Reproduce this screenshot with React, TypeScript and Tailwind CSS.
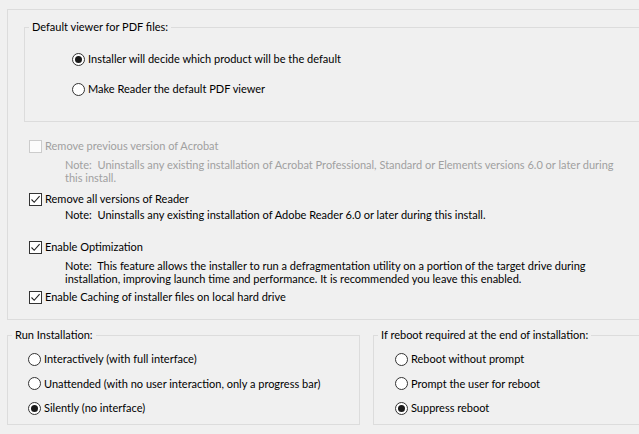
import React from "react";

const font = "font-['Lato',sans-serif] text-[11px] leading-[16px] text-black whitespace-nowrap";

function Radio({ checked }: { checked?: boolean }) {
  return (
    <span className="w-[13px] h-[13px] rounded-full border border-[#333333] bg-white flex items-center justify-center shrink-0">
      {checked && <span className="w-[7px] h-[7px] rounded-full bg-[#1a1a1a]" />}
    </span>
  );
}

function Check({ checked, disabled }: { checked?: boolean; disabled?: boolean }) {
  return (
    <span
      className={
        "w-[13px] h-[13px] border flex items-center justify-center shrink-0 " +
        (disabled ? "border-[#cccccc] bg-[#fcfcfc]" : "border-[#333333] bg-white")
      }
    >
      {checked && (
        <svg width="11" height="11" viewBox="0 0 11 11">
          <path d="M1.5 5.5 L4.2 8.3 L9.6 2.2" fill="none" stroke="#222" strokeWidth="1.1" />
        </svg>
      )}
    </span>
  );
}

function RadioRow({ label, checked }: { label: string; checked?: boolean }) {
  return (
    <div className="flex items-center gap-[3px] h-[16px]">
      <Radio checked={checked} />
      <span>{label}</span>
    </div>
  );
}

function CheckRow({ label, checked, disabled }: { label: string; checked?: boolean; disabled?: boolean }) {
  return (
    <div className={"flex items-center gap-[3px] h-[16px] " + (disabled ? "text-[#a0a0a0]" : "")}>
      <Check checked={checked} disabled={disabled} />
      <span>{label}</span>
    </div>
  );
}

export default function App() {
  return (
    <div className={"w-[639px] h-[434px] bg-[#f0f0f0] overflow-hidden pt-[9px] pl-[7px] " + font}>
      <div className="w-[660px] h-[311px] border-l border-t border-b border-[#dcdcdc] flex flex-col">
        <fieldset className="ml-[16px] mt-[9px] w-[640px] h-[103px] border border-[#dcdcdc] pt-0">
          <legend className="ml-[4px] px-[3px] leading-[16px]">Default viewer for PDF files:</legend>
          <div className="pl-[47px] pt-[16px] flex flex-col gap-[14px]">
            <RadioRow label="Installer will decide which product will be the default" checked />
            <RadioRow label="Make Reader the default PDF viewer" />
          </div>
        </fieldset>
        <div className="pl-[21px] mt-[16px] flex flex-col">
          <CheckRow label="Remove previous version of Acrobat" disabled />
          <div className="pl-[36px] mt-[4px] leading-[13px] text-[#a0a0a0]">
            Note:&nbsp; Uninstalls any existing installation of Acrobat Professional, Standard or Elements versions 6.0 or later during
            <br />
            this install.
          </div>
          <div className="mt-[7px]">
            <CheckRow label="Remove all versions of Reader" checked />
          </div>
          <div className="pl-[36px] mt-[1px] leading-[13px]">
            Note:&nbsp; Uninstalls any existing installation of Adobe Reader 6.0 or later during this install.
          </div>
          <div className="mt-[18px]">
            <CheckRow label="Enable Optimization" checked />
          </div>
          <div className="pl-[36px] mt-[4px] leading-[13px]">
            Note:&nbsp; This feature allows the installer to run a defragmentation utility on a portion of the target drive during
            <br />
            installation, improving launch time and performance. It is recommended you leave this enabled.
          </div>
          <div className="mt-[4px]">
            <CheckRow label="Enable Caching of installer files on local hard drive" checked />
          </div>
        </div>
      </div>
      <div className="flex mt-[7px] gap-[13px]">
        <fieldset className="shrink-0 w-[353px] h-[98px] border border-[#dcdcdc]">
          <legend className="ml-[4px] px-[3px] leading-[16px]">Run Installation:</legend>
          <div className="pl-[20px] pt-[8px] flex flex-col gap-[8.5px]">
            <RadioRow label="Interactively (with full interface)" />
            <RadioRow label="Unattended (with no user interaction, only a progress bar)" />
            <RadioRow label="Silently (no interface)" checked />
          </div>
        </fieldset>
        <fieldset className="shrink-0 w-[300px] h-[98px] border border-[#dcdcdc]">
          <legend className="ml-[4px] px-[3px] leading-[16px]">If reboot required at the end of installation:</legend>
          <div className="pl-[21px] pt-[8px] flex flex-col gap-[8.5px]">
            <RadioRow label="Reboot without prompt" />
            <RadioRow label="Prompt the user for reboot" />
            <RadioRow label="Suppress reboot" checked />
          </div>
        </fieldset>
      </div>
    </div>
  );
}
